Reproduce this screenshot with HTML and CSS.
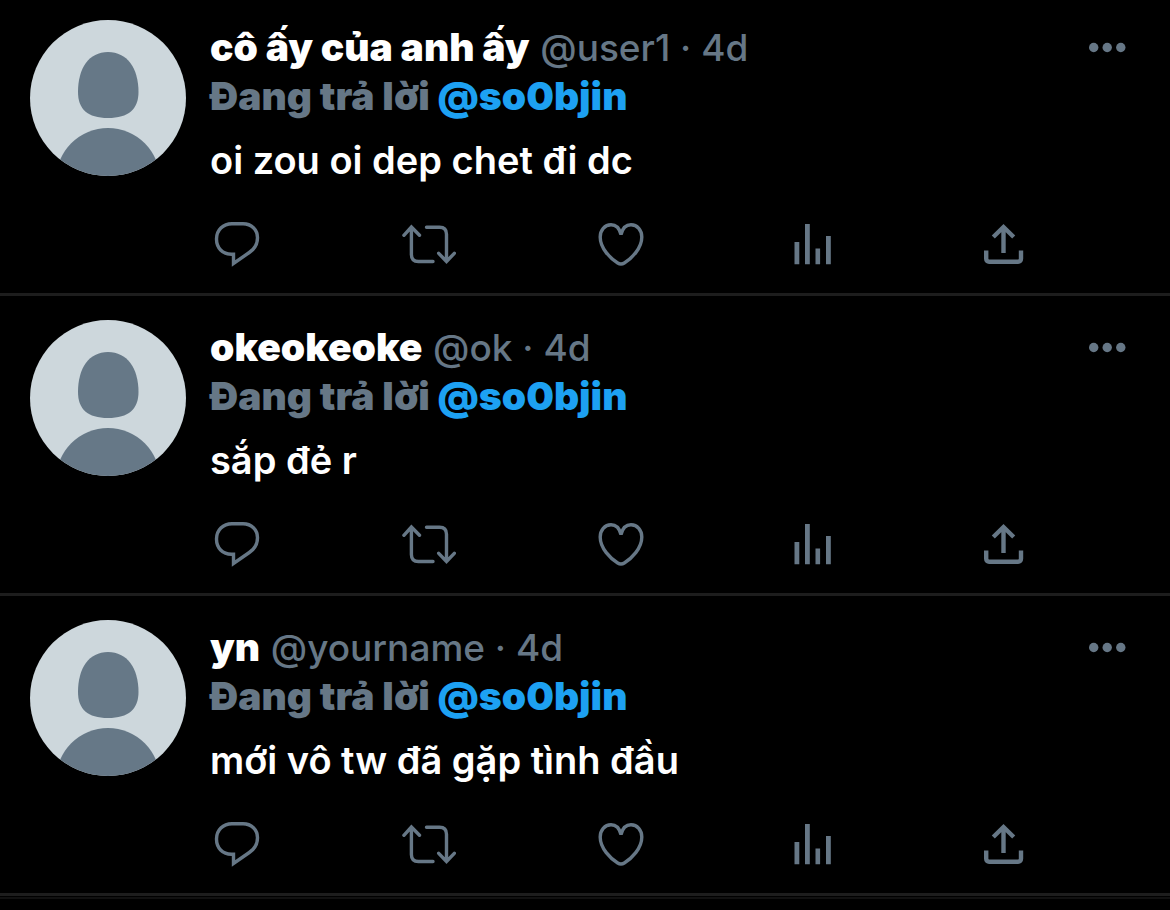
FILE: index.html
```
<!DOCTYPE html>
<html lang="vi">
<head>
  <meta charset="UTF-8" />
  <meta name="viewport" content="width=device-width, initial-scale=1" />
  <title>Replies</title>
  <link rel="stylesheet" href="styles.css">
</head>
<body>

  <!-- Shared icons -->
  <svg class="sprite" aria-hidden="true">
    <symbol id="avatar" viewBox="0 0 156 156">
      <rect width="156" height="156" fill="#cdd7dc" />
      <path fill="#667887" d="M78 32c19 0 30.500 16 30.500 40 0 17-10 26-30.500 26S48 89 48 72c0-24 11-40 30-40z" />
      <circle fill="#667887" cx="78" cy="160" r="52" />
    </symbol>
    <symbol id="more" viewBox="0 0 38 12">
      <g fill="currentColor"><circle cx="4.700" cy="6.500" r="4.700" /><circle cx="18.200" cy="6.500" r="4.700" /><circle cx="31.800" cy="6.500" r="4.700" /></g>
    </symbol>
    <symbol id="comment" viewBox="0 0 54 54">
      <path class="line" d="M22 6.700h11c8.500 0 14.500 6 14.500 14 0 6.300-3 11.300-8.200 14.800L23.500 46.500V37.200H21.500C12.500 37.200 6.500 31 6.500 22 6.500 13 13 6.700 22 6.700z" />
    </symbol>
    <symbol id="retweet" viewBox="0 0 54 54">
      <path class="line round" d="M1.900 18.300l7.500-8.300 8.100 8.300M9.400 10v27.500c0 4.500 2.500 7 7 7H31M24.500 10.300h13c4.500 0 7 2.500 7 7V44.500M36.700 36.300l7.800 8.200 7.800-8.200" />
    </symbol>
    <symbol id="heart" viewBox="0 0 54 54">
      <path class="line" d="M27 17.500C25.300 10.800 21.500 7.800 17 7.800 10.700 7.800 6.200 13 6.200 20c0 11.500 10.300 21.500 17.500 26 2.300 1.400 4.300 1.400 6.600 0C37.500 41.500 47.800 31.500 47.800 20c0-7-4.500-12.200-10.800-12.200-4.500 0-8.300 3-10 9.700z" />
    </symbol>
    <symbol id="stats" viewBox="0 0 54 54">
      <path fill="currentColor" d="M9.500 25h4.800v22.200H9.500zM20 7h4.800v40.200H20zM30.500 31.500h4.600v15.700h-4.600zM41 19h4.800v28.200H41z" />
    </symbol>
    <symbol id="share" viewBox="0 0 54 54">
      <path class="line thick" d="M26.500 36V9.500M16.300 20L26.500 10l10.200 10M9.200 33.500v8.300c0 1.700 1.200 2.900 2.900 2.900h29c1.700 0 2.900-1.200 2.900-2.900v-8.300" />
    </symbol>
  </svg>

  <main class="feed">

    <article class="post">
      <svg class="avatar" role="img" aria-label="Avatar"><use href="#avatar" /></svg>
      <div class="content">
        <header class="top">
          <div class="who"><strong class="name">cô ấy của anh ấy</strong> <span class="meta">@user1 · 4d</span></div>
          <button class="more" type="button" aria-label="More"><svg><use href="#more" /></svg></button>
        </header>
        <p class="reply">Đang trả lời <a href="#so0bjin">@so0bjin</a></p>
        <p class="text">oi zou oi dep chet đi dc</p>
        <footer class="actions">
          <button type="button" aria-label="Reply"><svg><use href="#comment" /></svg></button>
          <button type="button" aria-label="Retweet"><svg><use href="#retweet" /></svg></button>
          <button type="button" aria-label="Like"><svg><use href="#heart" /></svg></button>
          <button type="button" aria-label="Stats"><svg><use href="#stats" /></svg></button>
          <button type="button" aria-label="Share"><svg><use href="#share" /></svg></button>
        </footer>
      </div>
    </article>

    <article class="post">
      <svg class="avatar" role="img" aria-label="Avatar"><use href="#avatar" /></svg>
      <div class="content">
        <header class="top">
          <div class="who"><strong class="name">okeokeoke</strong> <span class="meta">@ok · 4d</span></div>
          <button class="more" type="button" aria-label="More"><svg><use href="#more" /></svg></button>
        </header>
        <p class="reply">Đang trả lời <a href="#so0bjin">@so0bjin</a></p>
        <p class="text">sắp đẻ r</p>
        <footer class="actions">
          <button type="button" aria-label="Reply"><svg><use href="#comment" /></svg></button>
          <button type="button" aria-label="Retweet"><svg><use href="#retweet" /></svg></button>
          <button type="button" aria-label="Like"><svg><use href="#heart" /></svg></button>
          <button type="button" aria-label="Stats"><svg><use href="#stats" /></svg></button>
          <button type="button" aria-label="Share"><svg><use href="#share" /></svg></button>
        </footer>
      </div>
    </article>

    <article class="post">
      <svg class="avatar" role="img" aria-label="Avatar"><use href="#avatar" /></svg>
      <div class="content">
        <header class="top">
          <div class="who"><strong class="name">yn</strong> <span class="meta">@yourname · 4d</span></div>
          <button class="more" type="button" aria-label="More"><svg><use href="#more" /></svg></button>
        </header>
        <p class="reply">Đang trả lời <a href="#so0bjin">@so0bjin</a></p>
        <p class="text">mới vô tw đã gặp tình đầu</p>
        <footer class="actions">
          <button type="button" aria-label="Reply"><svg><use href="#comment" /></svg></button>
          <button type="button" aria-label="Retweet"><svg><use href="#retweet" /></svg></button>
          <button type="button" aria-label="Like"><svg><use href="#heart" /></svg></button>
          <button type="button" aria-label="Stats"><svg><use href="#stats" /></svg></button>
          <button type="button" aria-label="Share"><svg><use href="#share" /></svg></button>
        </footer>
      </div>
    </article>

    <hr class="end">
  </main>

</body>
</html>
```
FILE: styles.css
```
* {
  box-sizing: border-box;
}

body {
  margin: 0;
  background-color: #000;
  color: #fff;
  font-family: Inter, "Liberation Sans", sans-serif;
  font-size: 38px;
  line-height: 49px;
}

.sprite {
  display: none;
}

.post {
  display: flex;
  gap: 24px;
  padding: 24px 43px 22px 30px;
  border-bottom: 3px solid #1d1d1d;
}

.post:first-child {
  padding-top: 20px;
}

.avatar {
  flex: none;
  width: 156px;
  height: 156px;
  border-radius: 50%;
}

.content {
  flex: 1;
  min-width: 0;
  padding-top: 2px;
}

.top {
  display: flex;
  justify-content: space-between;
  align-items: center;
  height: 49px;
}

.name,
.reply {
  font-size: 39px;
  font-weight: 900;
}

.meta {
  color: #667786;
  font-size: 37px;
  font-weight: 500;
}

button {
  padding: 0;
  border: none;
  background: none;
  color: #667786;
  cursor: pointer;
}

button svg {
  display: block;
}

.more svg {
  width: 38px;
  height: 12px;
}

.reply {
  margin: 0;
  color: #667786;
}

.reply a {
  color: #1da1f2;
  text-decoration: none;
}

.text {
  margin: 16px 0 32px;
  font-weight: 600;
}

.actions {
  display: flex;
  justify-content: space-between;
  margin-right: 96px;
}

.actions svg {
  width: 54px;
  height: 54px;
}

.line {
  fill: none;
  stroke: currentColor;
  stroke-width: 3.4;
}

.round {
  stroke-linecap: round;
}

.thick {
  stroke-width: 4.4;
}

.end {
  height: 2px;
  margin: 1px 0 0;
  border: none;
  background-color: #111;
}
```
